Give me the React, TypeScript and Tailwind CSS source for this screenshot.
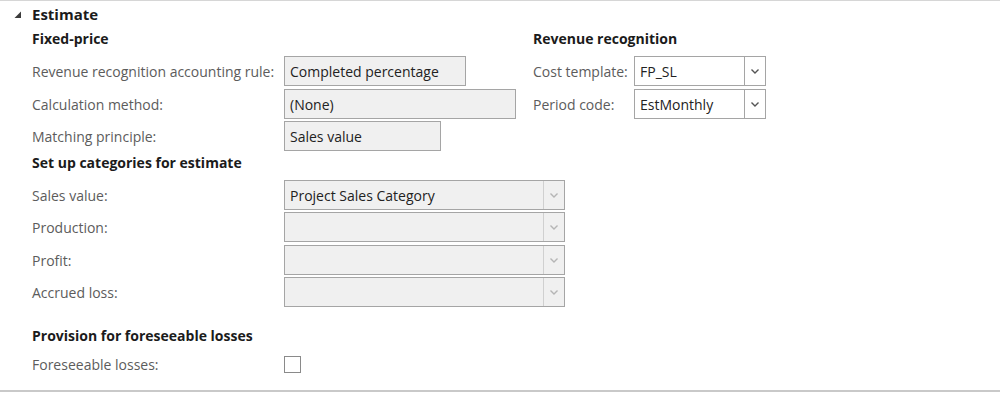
import { ReactNode } from 'react';

const font = { fontFamily: '"Open Sans", "Noto Sans", sans-serif' };

function Chevron({ light }: { light?: boolean }) {
  return (
    <svg width="10" height="7" viewBox="0 0 10 7" className="block">
      <path d="M1.5 1.5 L5 5 L8.5 1.5" fill="none" stroke={light ? '#b5b5b5' : '#555'} strokeWidth="1.4" />
    </svg>
  );
}

function Field({ value, width, select, white, light }: { value?: string; width: string; select?: boolean; white?: boolean; light?: boolean }) {
  return (
    <div className={`${width} h-[30px] flex items-stretch border border-[#a5a5a5] ${white ? 'bg-white' : 'bg-[#f0f0f0]'}`}>
      <div className="flex-1 flex items-center px-[5px] text-[14px] text-[#222] truncate">{value}</div>
      {select && (
        <div className={`w-[21px] flex items-center justify-center border-l ${light ? 'border-[#d0d0d0]' : 'border-[#a5a5a5]'}`}>
          <Chevron light={light} />
        </div>
      )}
    </div>
  );
}

function Row({ label, labelW, className = '', children }: { label: string; labelW: string; className?: string; children: ReactNode }) {
  return (
    <div className={`flex items-center h-[30px] ${className}`}>
      <div className={`${labelW} shrink-0 text-[14px] text-[#5c5c5c] whitespace-nowrap`}>{label}</div>
      {children}
    </div>
  );
}

function Heading({ children }: { children: ReactNode }) {
  return <div className="text-[14px] font-bold text-[#1b1b1b] leading-[20px]">{children}</div>;
}

export default function App() {
  return (
    <div className="w-[1000px] h-[393px] bg-white border-t border-[#d6d6d6] relative overflow-hidden" style={font}>
      <div className="flex items-center h-[27px] pl-[14px]">
        <svg width="8" height="8" viewBox="0 0 8 8" className="mr-[10px]">
          <polygon points="7,0.5 7,7 0.5,7" fill="#3c3c3c" />
        </svg>
        <div className="text-[15px] font-bold text-[#1b1b1b]">Estimate</div>
      </div>

      <div className="flex pl-[32px]">
        <div className="w-[501px]">
          <div className="mt-[1px] mb-[7px]"><Heading>Fixed-price</Heading></div>
          <Row label="Revenue recognition accounting rule:" labelW="w-[252px]">
            <Field value="Completed percentage" width="w-[182px]" />
          </Row>
          <Row label="Calculation method:" labelW="w-[252px]" className="mt-[3px]">
            <Field value="(None)" width="w-[232px]" />
          </Row>
          <Row label="Matching principle:" labelW="w-[252px]" className="mt-[2px]">
            <Field value="Sales value" width="w-[157px]" />
          </Row>
        </div>
        <div>
          <div className="mt-[1px] mb-[7px]"><Heading>Revenue recognition</Heading></div>
          <Row label="Cost template:" labelW="w-[101px]">
            <Field value="FP_SL" width="w-[132px]" select white />
          </Row>
          <Row label="Period code:" labelW="w-[101px]" className="mt-[3px]">
            <Field value="EstMonthly" width="w-[132px]" select white />
          </Row>
        </div>
      </div>

      <div className="pl-[32px]">
        <div className="mt-[2px] mb-[7px]"><Heading>Set up categories for estimate</Heading></div>
        <Row label="Sales value:" labelW="w-[252px]">
          <Field value="Project Sales Category" width="w-[281px]" select light />
        </Row>
        <Row label="Production:" labelW="w-[252px]" className="mt-[2px]">
          <Field width="w-[281px]" select light />
        </Row>
        <Row label="Profit:" labelW="w-[252px]" className="mt-[3px]">
          <Field width="w-[281px]" select light />
        </Row>
        <Row label="Accrued loss:" labelW="w-[252px]" className="mt-[2px]">
          <Field width="w-[281px]" select light />
        </Row>

        <div className="mt-[19px] mb-[9px]"><Heading>Provision for foreseeable losses</Heading></div>
        <div className="flex items-center h-[18px]">
          <div className="w-[252px] text-[14px] text-[#5c5c5c]">Foreseeable losses:</div>
          <div className="w-[17px] h-[17px] border border-[#8a8a8a] bg-white" />
        </div>
      </div>

      <div className="absolute left-0 right-0 top-[389px] h-[2px] bg-[#c9c9c9]" />
    </div>
  );
}
